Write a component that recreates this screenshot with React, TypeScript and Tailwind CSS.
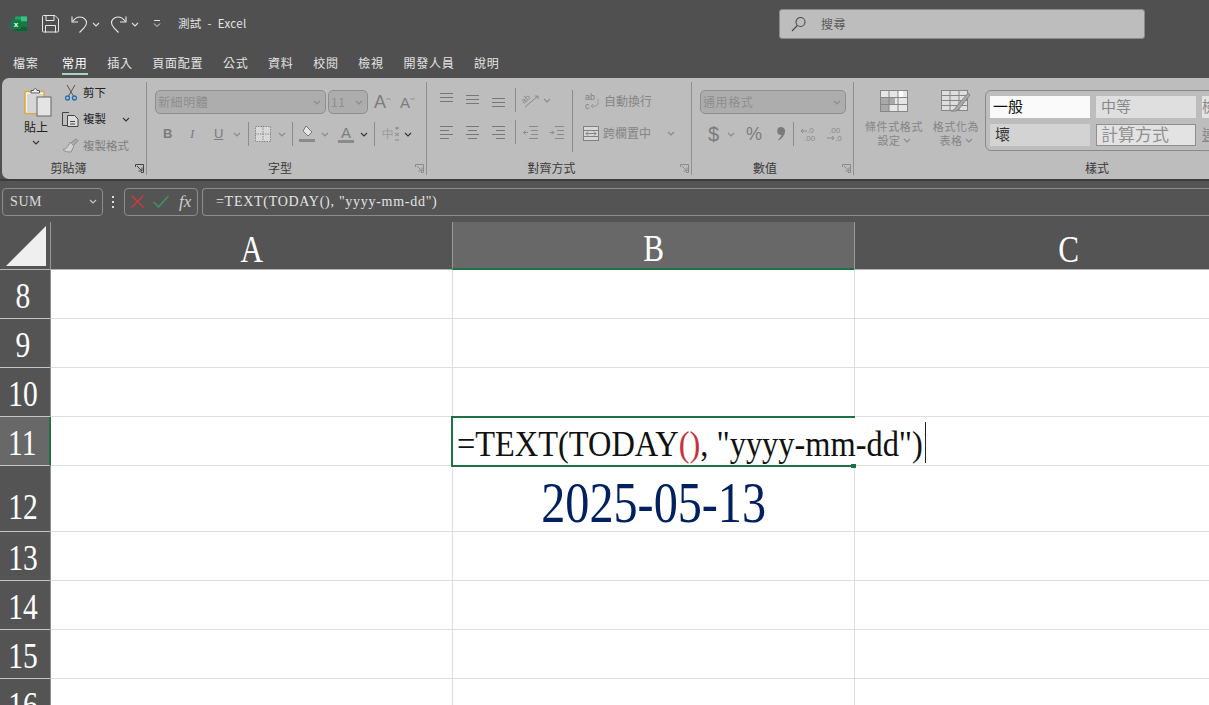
import React from "react";

const Chev = ({ c = "#555", cls = "" }: { c?: string; cls?: string }) => (
  <svg width="8" height="5" viewBox="0 0 8 5" className={cls} fill="none" stroke={c} strokeWidth="1.1"><path d="M1 1l3 3 3-3" /></svg>
);

const Lines = ({ ys, xs, c = "#777" }: { ys: number[]; xs: [number, number][]; c?: string }) => (
  <svg width="15" height="16" viewBox="0 0 15 16" stroke={c} strokeWidth="1" fill="none">
    {ys.map((y, i) => <path key={i} d={`M${xs[i][0]} ${y + 0.5}H${xs[i][1]}`} />)}
  </svg>
);

const Indent = ({ rev }: { rev?: boolean }) => (
  <svg width="15" height="16" viewBox="0 0 15 16" stroke="#8a8a8a" strokeWidth="1" fill="none">
    <path d="M6 2.500h9M8 6.500h7M8 10.500h7M6 14.500h9" />
    {rev ? <path d="M5 8.500H.5M2.500 6.500l-2 2 2 2" /> : <path d="M.5 8.500H5M3 6.500l2 2-2 2" />}
  </svg>
);

const Launcher = ({ c = "#555" }: { c?: string }) => (
  <svg width="9" height="9" viewBox="0 0 9 9" fill="none" stroke={c} className="absolute right-[3px] top-[6px]">
    <path d="M.5 3V.5H8.500V8.500H6" /><path d="M2 2l5 5M7 3.500V7H3.500" />
  </svg>
);

const Sep = () => <div className="w-px h-[24px] bg-[#8c8c8c] shrink-0" />;

const Combo = ({ w, text, tc = "#8e8e8e" }: { w: string; text: string; tc?: string }) => (
  <div className={`${w} h-[24px] rounded-[5px] border border-[#8f8f8f] bg-[#adadad] flex items-center justify-between pl-[2px] pr-[4px] text-[12px] shrink-0`}>
    <span style={{ color: tc }} className="tracking-[0.6px]">{text}</span>
    <Chev c="#8a8a8a" />
  </div>
);

const Excel = () => (
  <svg width="16" height="16" viewBox="0 0 16 16">
    <rect x="4" y="0.5" width="12" height="15" rx="1" fill="#21a366" />
    <rect x="10" y="0.5" width="6" height="5" fill="#33c481" />
    <rect x="4" y="5.500" width="6" height="5" fill="#21a366" />
    <rect x="10" y="5.500" width="6" height="5" fill="#107c41" />
    <rect x="4" y="10.500" width="12" height="5" fill="#185c37" />
    <rect x="0" y="3.500" width="10" height="9.500" rx="1" fill="#107c41" />
    <text x="5" y="11" fontSize="8" fontWeight="700" textAnchor="middle" fill="#fff" fontFamily="Liberation Sans">x</text>
  </svg>
);

const TitleBar = () => (
  <div className="h-[47px] flex items-center relative text-[#e4e4e4]">
    <div className="ml-[11px] mt-[1px]"><Excel /></div>
    <svg className="ml-[15px]" width="17" height="18" viewBox="0 0 17 18" fill="none" stroke="#e8e8e8" strokeWidth="1">
      <path d="M.5 1.500a1 1 0 0 1 1-1h11.500l3.500 3.500v12a1 1 0 0 1-1 1h-14a1 1 0 0 1-1-1z" />
      <path d="M4 .5v5h8v-5M3.500 17.500v-7h10v7" />
    </svg>
    <svg className="ml-[12px]" width="17" height="18" viewBox="0 0 17 18" fill="none" stroke="#e8e8e8" strokeWidth="1.1">
      <path d="M1 1.500v5.500h6" /><path d="M1.500 6.500C4 3 6.500 2 9 2c4 0 6.500 2.800 6.500 5.800 0 2-1 3.500-2.500 5L8.500 17.500" />
    </svg>
    <Chev c="#e0e0e0" cls="ml-[4px] mt-[1px]" />
    <svg className="ml-[10px]" width="17" height="18" viewBox="0 0 17 18" fill="none" stroke="#e8e8e8" strokeWidth="1.1">
      <path d="M16 1.500v5.500h-6" /><path d="M15.500 6.500C13 3 10.500 2 8 2 4 2 1.500 4.800 1.500 7.800c0 2 1 3.500 2.500 5l4.500 4.700" />
    </svg>
    <Chev c="#e0e0e0" cls="ml-[4px] mt-[1px]" />
    <svg className="ml-[14px]" width="8" height="9" viewBox="0 0 8 9" fill="none" stroke="#e0e0e0"><path d="M1 1.500h6M1 4.500l3 3 3-3" /></svg>
    <span className="ml-[17px] text-[11.5px] tracking-[0.35px] whitespace-pre">測試  -  Excel</span>
    <div className="absolute left-[779px] top-[9px] w-[366px] h-[30px] rounded-[3px] bg-[#bdbdbd] border border-[#8a8a8a] flex items-center pl-[11px]">
      <svg width="16" height="16" viewBox="0 0 16 16" fill="none" stroke="#4a4a4a" strokeWidth="1.1"><circle cx="9.500" cy="6" r="4.500" /><path d="M6.300 9.500L1 15" /></svg>
      <span className="ml-[14px] text-[12px] text-[#5a5a5a] tracking-[0.5px]">搜尋</span>
    </div>
  </div>
);

const tabs = ["檔案", "常用", "插入", "頁面配置", "公式", "資料", "校閱", "檢視", "開發人員", "說明"];
const TabBar = () => (
  <div className="h-[31px] flex pl-[13px] gap-[19.6px] text-[12px] tracking-[0.75px] text-[#e4e4e4]">
    {tabs.map((t, i) => (
      <div key={t} className={`h-[28px] pt-[7px] leading-[18px] ${i === 0 ? "mr-[4px]" : ""} ${i === 1 ? "border-b-[2px] border-[#a5d6bd] text-white" : ""}`}>{t}</div>
    ))}
  </div>
);

const Group = ({ w, label, lab, children, noBorder }: { w: string; label: string; lab: string; children: React.ReactNode; noBorder?: boolean }) => (
  <div className={`${w} h-full shrink-0 flex flex-col ${noBorder ? "" : "relative"}`}>
    <div className="h-[80px] relative">{children}</div>
    <div className={`h-[20px] relative flex items-center justify-center text-[12px] text-[#3a3a3a] ${lab}`}>
      {label}
      {!noBorder && <Launcher c={label === "剪貼簿" ? "#444" : "#8a8a8a"} />}
    </div>
    {!noBorder && <div className="absolute right-0 top-[4px] bottom-[4px] w-px bg-[#8f8f8f]" />}
  </div>
);

const Clipboard = () => (
  <div className="flex h-full">
    <div className="ml-[22px] w-[28px] flex flex-col items-center pt-[9px]">
      <svg width="28" height="30" viewBox="0 0 28 30" fill="none">
        <path d="M1 4.500h19v22H1z" fill="#f5f5f5" stroke="#e0a93a" strokeWidth="1.500" />
        <path d="M7 6V3.500h2.500C10 1 12.500 1 13 3.500h2.500V6z" fill="#eee" stroke="#555" />
        <path d="M3 26V7h16v19z" fill="#d6d6d6" />
        <rect x="13" y="10" width="14" height="19" fill="#e4e4e4" stroke="#666" />
      </svg>
      <span className="mt-[2px] mr-[4px] text-[12px] leading-[16px] text-[#222]">貼上</span>
      <Chev c="#333" cls="mt-[5px] mr-[4px]" />
    </div>
    <div className="ml-[10px] pt-[2px] flex flex-col text-[11.5px]">
      <div className="h-[26px] flex items-center">
        <svg className="ml-[3px]" width="12" height="16" viewBox="0 0 12 16" fill="none">
          <path d="M2 0l6.500 11M10 0L3.500 11" stroke="#555" />
          <circle cx="2.500" cy="13" r="2" stroke="#1f6fb2" strokeWidth="1.300" /><circle cx="9.500" cy="13" r="2" stroke="#1f6fb2" strokeWidth="1.300" />
        </svg>
        <span className="ml-[6px] text-[#222]">剪下</span>
      </div>
      <div className="h-[27px] flex items-center">
        <svg width="17" height="15" viewBox="0 0 17 15" fill="none" stroke="#444">
          <path d="M6 13.500H.5V.5H7" /><path d="M5.500 3.500h7l3.500 3.500v7.500h-10.500z" fill="#ddd" /><path d="M8 9.500h5M8 12h5" />
        </svg>
        <span className="ml-[4px] text-[#222]">複製</span>
        <Chev c="#333" cls="ml-[16px]" />
      </div>
      <div className="h-[26px] flex items-center">
        <svg className="ml-[1px]" width="16" height="15" viewBox="0 0 16 15" fill="none">
          <path d="M7 4l4 4-3 6C5 14 2 14 0 11.500 3 11 5 9 7 4z" fill="#d2d2d2" stroke="#8d8d8d" />
          <path d="M8.500 4.500L13 .8l2 2L11 7" fill="#aaa" stroke="#8d8d8d" />
        </svg>
        <span className="ml-[4px] text-[#7f7f7f]">複製格式</span>
      </div>
    </div>
  </div>
);

const FontGroup = () => (
  <div className="pt-[12px] flex flex-col gap-[8px]">
    <div className="flex items-center pl-[8px]">
      <Combo w="w-[171px]" text="新細明體" />
      <div className="ml-[2px]"><Combo w="w-[40px]" text="11" /></div>
      <span className="ml-[6px] text-[18px] leading-none text-[#7c7c7c] font-['Liberation_Sans',sans-serif]">A</span>
      <svg className="mb-[7px]" width="5" height="4" viewBox="0 0 5 4" fill="none" stroke="#888"><path d="M.5 3L2.500 1l2 2" /></svg>
      <span className="ml-[9px] text-[15px] leading-none text-[#7c7c7c] font-['Liberation_Sans',sans-serif]">A</span>
      <svg className="mb-[7px]" width="5" height="4" viewBox="0 0 5 4" fill="none" stroke="#888"><path d="M.5 1l2 2 2-2" /></svg>
    </div>
    <div className="flex items-center h-[24px] text-[#7c7c7c] font-['Liberation_Sans',sans-serif]">
      <span className="ml-[16px] w-[10px] text-[13px] font-bold">B</span>
      <span className="ml-[17px] w-[8px] text-[13px] italic font-['Liberation_Serif',serif]">I</span>
      <span className="ml-[16px] w-[10px] text-[13px] underline">U</span>
      <Chev c="#8a8a8a" cls="ml-[9px]" />
      <div className="ml-[7px]"><Sep /></div>
      <svg className="ml-[6px]" width="16" height="16" viewBox="0 0 16 16" fill="#d8d8d8" stroke="#888" strokeDasharray="1.500 1"><rect x=".5" y=".5" width="15" height="15" /><path d="M8 0v16M0 8h16" /></svg>
      <Chev c="#8a8a8a" cls="ml-[7px]" />
      <div className="ml-[6px]"><Sep /></div>
      <svg className="ml-[6px]" width="16" height="18" viewBox="0 0 16 18" fill="none"><path d="M7 1l6 6-4 4-5-5z" fill="#e6e6e6" stroke="#777" /><rect y="14" width="16" height="3" fill="#8a8a8a" /></svg>
      <Chev c="#8a8a8a" cls="ml-[6px]" />
      <div className="ml-[9px] w-[16px] flex flex-col items-center leading-none text-[15px]"><span>A</span><div className="w-[16px] h-[3px] bg-[#8a8a8a]" /></div>
      <Chev c="#333" cls="ml-[6px]" />
      <div className="ml-[6px]"><Sep /></div>
      <span className="ml-[7px] text-[12px] text-[#999]">中</span>
      <svg width="6" height="14" viewBox="0 0 6 14" fill="none" stroke="#888"><path d="M1 1h4M3 0v3M1 6l4 3M5 6L1 9M1 13h4" /></svg>
      <Chev c="#333" cls="ml-[4px]" />
    </div>
  </div>
);

const top3: [number, number][] = [[0, 13], [0, 13], [0, 13]];
const Alignment = () => (
  <div className="flex h-full">
    <div className="w-[145px] pt-[10px] flex flex-col gap-[8px]">
      <div className="flex items-center h-[24px] pl-[13px] gap-[11px]">
        <Lines ys={[1, 5, 9]} xs={top3} />
        <Lines ys={[3, 7, 11]} xs={top3} />
        <Lines ys={[6, 10, 14]} xs={top3} />
        <div className="-ml-[3px]"><Sep /></div>
        <svg width="18" height="16" viewBox="0 0 18 16" fill="none" stroke="#888" className="-ml-[5px]"><path d="M3 15L16 4M16 4h-3M16 4v3" /><text x="0" y="9" fontSize="8" fill="#888" stroke="none" transform="rotate(-40 5 8)" fontFamily="Liberation Sans">ab</text></svg>
        <Chev c="#8a8a8a" cls="-ml-[8px]" />
      </div>
      <div className="flex items-center h-[24px] pl-[13px] gap-[11px]">
        <Lines ys={[2, 6, 10, 14]} xs={[[0, 13], [0, 9], [0, 13], [0, 9]]} />
        <Lines ys={[2, 6, 10, 14]} xs={[[0, 13], [2, 11], [0, 13], [2, 11]]} />
        <Lines ys={[2, 6, 10, 14]} xs={[[0, 13], [4, 13], [0, 13], [4, 13]]} />
        <div className="-ml-[3px]"><Sep /></div>
        <div className="-ml-[4px]"><Indent rev /></div>
        <Indent />
      </div>
    </div>
    <div className="w-px h-[62px] mt-[12px] bg-[#8c8c8c]" />
    <div className="pt-[11px] flex flex-col gap-[8px] text-[12px] text-[#858585]">
      <div className="h-[24px] flex items-center pl-[12px]">
        <svg width="15" height="18" viewBox="0 0 15 18" fill="none" stroke="#999">
          <text x="0" y="8" fontSize="9" fill="#808080" stroke="none" fontFamily="Liberation Sans">ab</text>
          <text x="0" y="17" fontSize="9" fill="#808080" stroke="none" fontFamily="Liberation Sans">c</text>
          <path d="M13 7v4c0 2-1 3-3 3H6M8 12l-2 2 2 2" />
        </svg>
        <span className="ml-[4px]">自動換行</span>
      </div>
      <div className="h-[24px] flex items-center pl-[10px]">
        <svg width="16" height="15" viewBox="0 0 16 15" fill="#d6d6d6" stroke="#808080"><rect x=".5" y=".5" width="15" height="14" /><path d="M.5 4.500h15M.5 10.500h15M3 7.500h10M5 5.500l-2 2 2 2M11 5.500l2 2-2 2" fill="none" /></svg>
        <span className="ml-[4px]">跨欄置中</span>
        <Chev c="#8a8a8a" cls="ml-[16px]" />
      </div>
    </div>
  </div>
);

const NumberGroup = () => (
  <div className="pt-[12px] pl-[8px] flex flex-col gap-[8px]">
    <Combo w="w-[146px]" text="通用格式" />
    <div className="h-[24px] flex items-center text-[#7c7c7c] font-['Liberation_Sans',sans-serif]">
      <span className="ml-[8px] w-[13px] text-[20px] font-light leading-none">$</span>
      <Chev c="#8a8a8a" cls="ml-[6px]" />
      <span className="ml-[11px] w-[18px] text-[18px] leading-none">%</span>
      <svg className="ml-[13px]" width="8" height="14" viewBox="0 0 8 14" fill="#7a7a7a"><path d="M4 0a4 4 0 0 1 4 4.500C8 8 5 11.500 1.500 13.500L1 12.800C3 11 4 9.500 4.500 8A4 4 0 1 1 4 0z" /></svg>
      <div className="ml-[8px]"><Sep /></div>
      <svg className="ml-[6px]" width="16" height="17" viewBox="0 0 16 17" fill="#8a8a8a"><text x="7" y="7" fontSize="8" fontFamily="Liberation Sans">.0</text><text x="4" y="15" fontSize="8" fontFamily="Liberation Sans">.00</text><path d="M1 5h6M1 5l2-2M1 5l2 2" fill="none" stroke="#8a8a8a" /></svg>
      <svg className="ml-[10px]" width="16" height="17" viewBox="0 0 16 17" fill="#8a8a8a"><text x="3" y="7" fontSize="8" fontFamily="Liberation Sans">.00</text><text x="9" y="15" fontSize="8" fontFamily="Liberation Sans">.0</text><path d="M1 12h7M8 12l-2-2M8 12l-2 2" fill="none" stroke="#8a8a8a" /></svg>
    </div>
  </div>
);

const StyleCell = ({ cls, children }: { cls: string; children: React.ReactNode }) => (
  <div className={`w-[100px] h-[22px] shrink-0 overflow-hidden whitespace-nowrap flex items-center leading-none pb-[3px] ${cls}`}>{children}</div>
);

const Styles = () => (
  <div className="flex h-full">
    <div className="w-[131px] flex text-[11px] leading-[14px] tracking-[0.6px] text-[#858585] text-center">
      <div className="ml-[9px] w-[62px] flex flex-col items-center pt-[12px]">
        <svg width="28" height="22" viewBox="0 0 28 22" fill="#e6e6e6" stroke="#868686"><rect x=".5" y=".5" width="27" height="21" /><rect x="1" y="8" width="14" height="6" fill="#a9a9a9" stroke="none" /><rect x="1" y="15" width="8" height="6" fill="#a9a9a9" stroke="none" /><rect x="18" y="1" width="5" height="6" fill="#fff" stroke="none" /><path d="M0 7.500h28M0 14.500h28M9 0v22M18 0v22" fill="none" /></svg>
        <div className="mt-[7px]">條件式格式</div>
        <div className="flex items-center gap-[2px]">設定<Chev c="#8a8a8a" /></div>
      </div>
      <div className="ml-[6px] w-[50px] flex flex-col items-center pt-[12px] shrink-0">
        <svg width="30" height="22" viewBox="0 0 30 22" fill="#dedede" stroke="#868686"><rect x=".5" y=".5" width="26" height="20" /><path d="M0 5.500h27M0 10.500h27M0 15.500h27M9 0v21M18 0v21" fill="none" /><path d="M15 17L27 3l2 2-11 14c-3 3-6 2-8 2 3-1 4-2 5-4z" fill="#a8a8a8" /></svg>
        <div className="mt-[7px] whitespace-nowrap">格式化為</div>
        <div className="flex items-center gap-[2px]">表格<Chev c="#8a8a8a" /></div>
      </div>
    </div>
    <div className="ml-[4px] w-[240px] h-[61px] mt-[12px] rounded-[6px] border border-[#8a8a8a] shrink-0 flex flex-col gap-[6px] pl-[4px] pt-[5px]">
      <div className="flex gap-[6px]">
        <StyleCell cls="bg-[#fafafa] text-[15px] text-[#111] pl-[3px]">一般</StyleCell>
        <StyleCell cls="bg-[#dfdfdf] text-[15px] text-[#888] pl-[5px]">中等</StyleCell>
        <StyleCell cls="bg-[#e3e3e3] text-[15px] text-[#888]">檢查儲存格</StyleCell>
      </div>
      <div className="flex gap-[6px]">
        <StyleCell cls="bg-[#d3d3d3] text-[15px] text-[#333] pl-[5px]">壞</StyleCell>
        <StyleCell cls="bg-[#e3e3e3] text-[17px] text-[#909090] pl-[4px] border border-[#8f8f8f]">計算方式</StyleCell>
        <StyleCell cls="text-[15px] text-[#888] underline">連結的儲存格</StyleCell>
      </div>
    </div>
  </div>
);

const Ribbon = () => (
  <div className="h-[101px] ml-[2px] rounded-l-[7px] bg-[#bdbdbd] flex overflow-hidden shrink-0">
    <Group w="w-[145px]" label="剪貼簿" lab="pr-[12px]"><Clipboard /></Group>
    <Group w="w-[280px]" label="字型" lab="pr-[14px]"><FontGroup /></Group>
    <Group w="w-[265px]" label="對齊方式" lab="pr-[16px]"><Alignment /></Group>
    <Group w="w-[162px]" label="數值" lab="pr-[16px]"><NumberGroup /></Group>
    <Group w="w-[355px]" label="樣式" lab="pl-[131px]" noBorder><Styles /></Group>
  </div>
);

const FormulaBar = () => (
  <div className="h-[43px] bg-[#545454] flex items-center pl-[2px] shrink-0 border-t-2 border-[#3c3c3c]">
    <div className="w-[101px] h-[28px] rounded-[4px] border border-[#8c8c8c] flex items-center justify-between pl-[7px] pr-[5px] text-[#dcdcdc] text-[14px] tracking-[0.6px] font-['Liberation_Serif',serif]">
      SUM<Chev c="#c8c8c8" />
    </div>
    <div className="ml-[9px] w-[3px] flex flex-col gap-[3px]">
      <div className="w-[2px] h-[2px] bg-[#ddd]" /><div className="w-[2px] h-[2px] bg-[#ddd]" /><div className="w-[2px] h-[2px] bg-[#ddd]" />
    </div>
    <div className="ml-[9px] w-[74px] h-[28px] rounded-[4px] border border-[#8c8c8c] flex items-center pl-[6px]">
      <svg width="13" height="13" viewBox="0 0 13 13" fill="none" stroke="#d2383c" strokeWidth="1.300"><path d="M.5.5l12 12M12.500.5l-12 12" /></svg>
      <svg className="ml-[9px]" width="16" height="13" viewBox="0 0 16 13" fill="none" stroke="#3c9a5f" strokeWidth="1.300"><path d="M.5 7l5 5L15.500 1" /></svg>
      <span className="ml-[10px] text-[17px] italic leading-none text-[#cfcfcf] font-['Liberation_Serif',serif]">fx</span>
    </div>
    <div className="ml-[4px] flex-1 h-[28px] rounded-l-[4px] border border-r-0 border-[#8c8c8c] flex items-center pl-[13px] text-[#e4e4e4] text-[14px] tracking-[0.72px] whitespace-nowrap font-['Liberation_Serif',serif]">
      =TEXT(TODAY(), "yyyy-mm-dd")
    </div>
  </div>
);

const serif = "font-['Liberation_Serif',serif]";

const ColHead = ({ w, t, sel }: { w: string; t: string; sel?: boolean }) => (
  <div className={`${w} shrink-0 h-full flex items-end justify-center border-l border-[#9a9a9a] ${sel ? "bg-[#686868] border-b-2 border-b-[#1e7145]" : "border-b border-b-[#b5b5b5]"}`}>
    <span className={`${serif} text-[38px] leading-[40px] text-white scale-x-[0.82]`}>{t}</span>
  </div>
);

type Row = { n: number; h: string; sel?: boolean; b?: React.ReactNode; hp?: string };
const rows: Row[] = [
  { n: 8, h: "h-[49px]" },
  { n: 9, h: "h-[49px]" },
  { n: 10, h: "h-[49px]" },
  {
    n: 11, h: "h-[49px]", sel: true,
    b: (
      <div className="absolute -left-[2px] -top-[1px] w-[475px] h-[51px] z-10">
        <div className="absolute left-0 top-0 w-[404px] h-full border-2 border-r-0 border-[#1e7145] bg-white" />
        <div className="absolute left-[402px] top-[2px] w-[71px] h-[47px] bg-white" />
        <div className="absolute left-[400px] bottom-[-1px] w-[5px] h-[4px] bg-[#1e7145] z-20" />
        <div className="absolute left-[474px] top-[6px] w-px h-[41px] bg-[#222] z-20" />
        <div className={`absolute left-[6px] top-[6px] ${serif} text-[36px] leading-[44px] text-[#111] whitespace-nowrap origin-left scale-x-[0.9]`}>
          =TEXT(TODAY<span className="text-[#c8323c] font-light">()</span>, "yyyy-mm-dd")
        </div>
      </div>
    ),
  },
  {
    n: 12, h: "h-[66px]", hp: "pb-[2px]",
    b: <div className={`h-full flex items-end justify-center pb-[3px] ${serif} text-[56px] leading-[50px] text-[#002060] whitespace-nowrap`}><span className="scale-x-[0.86]">2025-05-13</span></div>,
  },
  { n: 13, h: "h-[49px]" },
  { n: 14, h: "h-[49px]" },
  { n: 15, h: "h-[49px]" },
  { n: 16, h: "h-[49px]" },
];

const Sheet = () => (
  <div className="flex-1 flex flex-col overflow-hidden bg-white">
    <div className="h-[48px] bg-[#545454] flex shrink-0">
      <div className="w-[50px] h-full shrink-0 flex items-end justify-center pb-[3px] border-b border-[#b5b5b5]">
        <svg className="ml-[2px]" width="42" height="41" viewBox="0 0 42 41"><path d="M1 41L41 1v40z" fill="#efefef" /></svg>
      </div>
      <ColHead w="w-[402px]" t="A" />
      <ColHead w="w-[402px]" t="B" sel />
      <ColHead w="w-[428px]" t="C" />
    </div>
    {rows.map((r) => (
      <div key={r.n} className={`${r.h} flex shrink-0`}>
        <div className={`w-[51px] shrink-0 flex items-end justify-center pr-[5px] border-b border-[#c4c4c4] ${r.hp ?? ""} ${r.sel ? "bg-[#686868] border-r-2 border-r-[#1e7145]" : "bg-[#545454] border-r border-r-[#8f8f8f]"}`}>
          <span className={`${serif} text-[36px] leading-[44px] text-white scale-x-[0.82] whitespace-nowrap`}>{r.n}</span>
        </div>
        <div className="w-[402px] shrink-0 border-b border-r border-[#dedede]" />
        <div className={`w-[402px] shrink-0 border-b border-r border-[#dedede] ${r.sel ? "relative" : ""}`}>{r.b}</div>
        <div className="flex-1 border-b border-[#dedede]" />
      </div>
    ))}
  </div>
);

export default function App() {
  return (
    <div className="w-[1209px] h-[705px] overflow-hidden flex flex-col bg-[#505050] font-['Noto_Sans_CJK_TC','Noto_Sans',sans-serif]">
      <TitleBar />
      <TabBar />
      <Ribbon />
      <FormulaBar />
      <Sheet />
    </div>
  );
}
